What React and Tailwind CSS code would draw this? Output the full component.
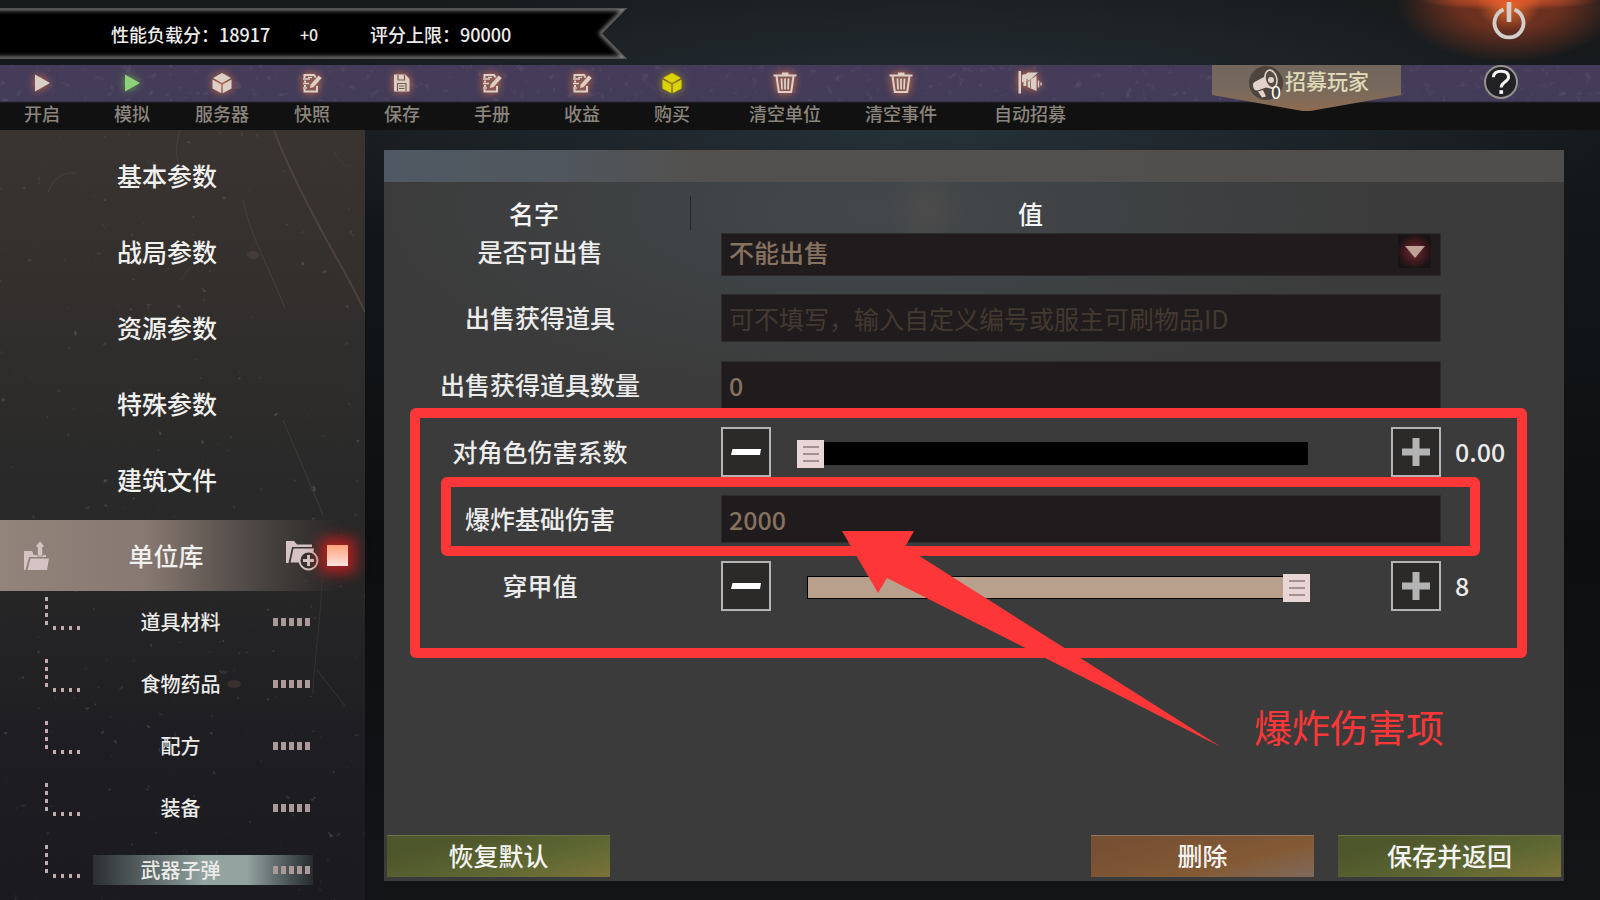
import React, { useState } from 'react';

const GLOW = "overflow-visible drop-shadow-[0_0_4px_rgba(235,120,70,0.9)]";

/* ---------- icons ---------- */

function PlayIcon({ className = "" }) {
    return (
        <svg viewBox="0 0 24 24" className={`size-6 overflow-visible ${className}`} fill="currentColor">
            <path d="M5 3.500v17L20 12z" />
        </svg>
    );
}

function CubeIcon({ className = "" }) {
    return (
        <svg viewBox="0 0 24 24" className={`size-6 overflow-visible ${className}`} fill="currentColor">
            <path d="M12 2 21 7 12 12 3 7z" />
            <path d="M2.5 8.6 11.3 13.4V22.2L2.5 17.4z" />
            <path d="M21.5 8.6 12.7 13.4V22.2L21.5 17.4z" />
        </svg>
    );
}

function NoteIcon() {
    return (
        <svg viewBox="0 0 24 24" className={`size-6 ${GLOW}`}>
            <path d="M4.500 3h10l2 3L10 14v3h4l4-3v7H4.500z" fill="#8a5a55" />
            <g fill="none" stroke="currentColor" strokeWidth="2">
                <path d="M15.500 6.500 14 4H4.500v3M5 9.500v2M5 14v2M4.500 18v2.500H17V15" />
                <path d="M3 8h7M3 12.500h6M3 17h4" strokeWidth="1.700" />
                <path d="M8 6.500h4" strokeWidth="1.300" />
            </g>
            <path d="M18.500 4.500 21.800 7 13.500 16 9.800 17 10.800 13.500z" fill="currentColor" />
        </svg>
    );
}

function DiskIcon() {
    return (
        <svg viewBox="0 0 24 24" className={`size-6 ${GLOW}`}>
            <path d="M4 3.500h11.500L19.500 8v12.500H4z" fill="currentColor" />
            <path d="M8 4v5h6.500V4M7.500 20v-7.500h8.500V20M9 15h5.500M9 17.500h5.500" fill="none" stroke="#7d5a52" strokeWidth="1.200" />
        </svg>
    );
}

function BinIcon() {
    return (
        <svg viewBox="0 0 24 24" className={`size-6 ${GLOW}`} fill="none" stroke="currentColor">
            <path d="M4.500 5 6 20H18L19.500 5z" fill="#8a5a55" stroke="none" />
            <path d="M.5 4.500h23M9 2.500h6.500" strokeWidth="2" />
            <path d="M3.500 5 5.800 21H18.200L20.500 5" strokeWidth="2" />
            <path d="M8.500 7.500 9 18.500M12 7.500v11M15.500 7.500 15 18.500" strokeWidth="1.800" />
        </svg>
    );
}

function FlagHornIcon() {
    return (
        <svg viewBox="0 0 24 24" className={`size-6 ${GLOW}`} fill="currentColor">
            <path d="M.5 0h2.500v22.500H.5z" />
            <path d="M4 4 8 3l2-1.500h10L13 8 9.500 10H8v1H4z" />
            <path d="M5.500 9.500h3v5.500h-3z" />
            <path d="M9.500 11 18.500 4.500V20L13 17.500 9.500 16z" />
            <path d="M20.500 9.500v7M23 11.500v3" stroke="currentColor" strokeWidth="1.400" />
            <path d="M9 8v8M12.500 9.200v7.800" stroke="#7d5a52" strokeWidth=".8" />
        </svg>
    );
}

function PowerIcon() {
    return (
        <svg viewBox="0 0 36 40" className="h-10 w-9" fill="none" stroke="#d3cdcc">
            <path d="M12.500 9.500a14.500 14.500 0 1 0 11 0" strokeWidth="3.800" />
            <path d="M18 2v20" strokeWidth="4.600" />
        </svg>
    );
}

function MegaphoneIcon() {
    return (
        <svg viewBox="0 0 34 34" className="size-[34px]">
            <circle cx="17" cy="17" r="17" fill="#4d443d" />
            <path d="M4 19c0-2 1-3 2.500-3.500L15 11l5-6 4 18-7-1.500-8.500 3C5.500 25 4 22 4 19z" fill="#e0d2c8" />
            <ellipse cx="22" cy="13" rx="5.800" ry="9" transform="rotate(-14 22 13)" fill="#574b43" stroke="#e0d2c8" strokeWidth="1.600" />
            <circle cx="22" cy="14" r="3" fill="#e0d2c8" />
            <path d="M9 25.500 14 24l3 6.500-4 1z" fill="#e0d2c8" />
        </svg>
    );
}

function FolderUpIcon() {
    return (
        <svg viewBox="0 0 25 30" className="h-[30px] w-[25px]" fill="#d5c3c4">
            <path d="M0 10h8l1.500 4H22v2H5L1.500 29H0z" />
            <path d="M6.500 17.500H25L23 29H3.500z" />
            <path d="M16 0l5 6h-2.500v9h-5V6H11z" stroke="#8b7e77" strokeWidth=".6" />
        </svg>
    );
}

function FolderAddIcon() {
    return (
        <svg viewBox="0 0 33 31" className="h-[31px] w-[33px]" fill="#d5c3c4">
            <path d="M0 1h8l3 3.500h15V7H6L2.500 23H0z" />
            <path d="M7.500 8.500H28l-1 5.500a9 9 0 0 0-12 8.500H4.500z" />
            <circle cx="22.500" cy="20.500" r="9" fill="#37322f" stroke="#d5c3c4" strokeWidth="2" />
            <path d="M22.500 15v11M17 20.500h11" stroke="#d5c3c4" strokeWidth="3" />
        </svg>
    );
}

function TreeDots() {
    return (
        <svg viewBox="0 0 37 33" className="mt-1.5 ml-[45px] h-[33px] w-[37px] shrink-0 self-start" fill="#c0aeae">
            {[0, 8, 16, 24].map((n) => (
                <React.Fragment key={n}>
                    <rect x="0" y={n} width="3" height="4" />
                    <rect x={n + 8} y="29" width="3" height="4" />
                </React.Fragment>
            ))}
        </svg>
    );
}

/* ---------- top ---------- */

function ScoreBanner() {
    return (
        <div className="relative mt-2 flex h-[51px] w-[627px] items-center text-lg leading-none font-medium text-[#ededed]">
            <svg viewBox="0 0 627 51" className="absolute inset-0 h-full w-full">
                <defs>
                    <clipPath id="banner"><path d="M0 0H627L602 25.500 627 51H0z" /></clipPath>
                    <filter id="soft"><feGaussianBlur stdDeviation="2" /></filter>
                </defs>
                <g clipPath="url(#banner)">
                    <rect width="627" height="51" fill="#000" />
                    <path d="M-9 0H627L602 25.500 627 51H-9" fill="none" stroke="#858585" strokeWidth="5" filter="url(#soft)" />
                    <path d="M-9 0H627L602 25.500 627 51H-9" fill="none" stroke="#555" strokeWidth="2" />
                </g>
            </svg>
            <span className="relative w-[188px] pl-[111px] whitespace-nowrap">性能负载分：18917</span>
            <span className="relative ml-[112px] w-[70px] text-base">+0</span>
            <span className="relative whitespace-nowrap">评分上限：90000</span>
        </div>
    );
}

const TOOLS = [
    { label: '开启', icon: <PlayIcon className="drop-shadow-[0_0_4px_rgba(235,120,70,0.9)]" /> },
    { label: '模拟', icon: <PlayIcon className="text-[#8fd07c] drop-shadow-[0_0_4px_rgba(120,200,80,0.8)]" /> },
    { label: '服务器', icon: <CubeIcon className="drop-shadow-[0_0_4px_rgba(235,120,70,0.9)]" /> },
    { label: '快照', icon: <NoteIcon /> },
    { label: '保存', icon: <DiskIcon /> },
    { label: '手册', icon: <NoteIcon /> },
    { label: '收益', icon: <NoteIcon /> },
    { label: '购买', icon: <CubeIcon className="text-[#dcd200] drop-shadow-[0_0_4px_rgba(220,190,0,0.7)]" /> },
];

const WIDE_TOOLS = [
    { label: '清空单位', icon: <BinIcon />, width: "w-[116px]" },
    { label: '清空事件', icon: <BinIcon />, width: "w-[116px]" },
    { label: '自动招募', icon: <FlagHornIcon />, width: "w-[142px]" },
];

function ToolButton({ label, icon, width }) {
    return (
        <button type="button" className={`flex shrink-0 flex-col items-center text-[#dccfc5] ${width}`}>
            <span className="flex h-9 items-center">{icon}</span>
            <span className="flex h-7 items-center pb-1 text-lg leading-none font-medium text-[#8b857d]">{label}</span>
        </button>
    );
}

function Toolbar() {
    return (
        <nav className="relative flex h-[65px] bg-[linear-gradient(#453c5a_0,#433c58_36px,#2c2836_37px,#111_38px)]">
            <svg className="absolute inset-x-0 top-0 h-9 w-full" preserveAspectRatio="none">
                <defs>
                    <filter id="grain">
                        <feTurbulence type="fractalNoise" baseFrequency="0.12" numOctaves="3" seed="4" />
                        <feColorMatrix values="0 0 0 0 0.14  0 0 0 0 0.12  0 0 0 0 0.18  0 6 0 0 -3.9" />
                    </filter>
                </defs>
                <rect width="100%" height="100%" filter="url(#grain)" opacity=".35" />
            </svg>
            <div className="relative flex flex-1">
                <div className="-ml-0.5 flex gap-0.5">
                    {TOOLS.map((tool) => <ToolButton key={tool.label} {...tool} width="w-[88px]" />)}
                </div>
                <div className="ml-[11px] flex">
                    {WIDE_TOOLS.map((tool) => <ToolButton key={tool.label} {...tool} />)}
                </div>
                <button
                    type="button"
                    className="mr-[83px] ml-auto flex h-[46px] w-[189px] items-start bg-linear-to-b from-[#72655c] via-[#78695d] to-[#8d6c51] pt-px pl-[37px] [clip-path:polygon(0_0,100%_0,100%_30px,52%_100%,48%_100%,0_30px)]"
                >
                    <span className="relative">
                        <MegaphoneIcon />
                        <span className="absolute right-0.5 bottom-0 text-lg leading-none text-white">0</span>
                    </span>
                    <span className="pt-0.5 pl-0.5 text-[21px] leading-6 font-medium text-[#dfdbb8]">招募玩家</span>
                </button>
                <button
                    type="button"
                    aria-label="帮助"
                    className="mr-[82px] flex size-[34px] items-center justify-center rounded-full border-2 border-[#96938f] bg-[#222124]"
                >
                    <svg viewBox="0 0 24 24" className="size-7" fill="none" stroke="#f4f4f4" strokeWidth="2.600">
                        <path d="M5.500 8C5.500 4.500 8 2.800 12 2.800s6.500 1.700 6.500 5c0 4.200-6.300 4-6.300 9" />
                        <path d="M12.200 19v3.200" strokeWidth="3.200" />
                    </svg>
                </button>
            </div>
        </nav>
    );
}

/* ---------- sidebar ---------- */

const SECTIONS = ['基本参数', '战局参数', '资源参数', '特殊参数', '建筑文件'];
const UNITS = ['道具材料', '食物药品', '配方', '装备', '武器子弹'];

function Scratches() {
    return (
        <svg viewBox="0 0 365 770" className="absolute inset-0 h-full w-full" preserveAspectRatio="none" fill="none">
            <filter id="specks">
                <feTurbulence type="fractalNoise" baseFrequency="0.11" numOctaves="3" seed="9" />
                <feColorMatrix values="0 0 0 0 0.4  0 0 0 0 0.29  0 0 0 0 0.27  0 8 0 0 -6.200" />
            </filter>
            <rect width="365" height="770" filter="url(#specks)" opacity=".28" />
            <path d="M274 0C284 28 300 60 318 94S350 150 365 182" stroke="#4d423b" strokeWidth="2" />
            <path d="M180 0C176 12 176 24 178 32M48 62C54 48 62 42 76 43M243 70C250 105 270 140 285 178" stroke="#4a403a" />
            <path d="M335 22c2 8 8 12 14 15M190 137l-9 13M283 290l40 95" stroke="#453a35" />
            <path d="M322 450c-2 50-8 80-9 114M317 540l28 36" stroke="#343434" />
            <ellipse cx="253" cy="125" rx="6" ry="4" fill="#463c37" />
            <ellipse cx="234" cy="554" rx="7" ry="4" fill="#3a302e" />
        </svg>
    );
}

function UnitRow({ label, active }) {
    return (
        <button type="button" className="flex h-[62px] w-full items-center text-left">
            <TreeDots />
            <span className={`ml-[11px] flex h-[30px] w-[220px] items-center ${active ? 'bg-[linear-gradient(90deg,#2b2f31_0,#6f7d7b_35%,#92a3a0_50%,#92a3a0_70%,#4e5858_88%,#272b2d)]' : ''}`}>
                <span className="w-[175px] text-center text-xl leading-none font-medium text-[#ebebe9]">{label}</span>
                <span className="ml-[5px] flex gap-[3px]">
                    {[0, 1, 2, 3, 4].map((n) => <i key={n} className="h-2 w-[5px] bg-[#ab9999]" />)}
                </span>
            </span>
        </button>
    );
}

function Sidebar() {
    return (
        <aside className="relative w-[365px] shrink-0 bg-[linear-gradient(#3a3431,#2d2c2b_35%,#262627_60%,#1e1e22_80%,#1a1a1f)]">
            <Scratches />
            <div className="relative pt-[9px]">
                {SECTIONS.map((label) => (
                    <button
                        key={label}
                        type="button"
                        className="flex h-[76px] w-full items-center justify-center pr-[31px] pb-1 text-[25px] leading-none font-medium text-[#f0f0ee]"
                    >
                        {label}
                    </button>
                ))}
                <button
                    type="button"
                    className="mt-px flex h-[71px] w-full items-center bg-[linear-gradient(90deg,#92837b_0,#877971_40%,#5b534f_62%,#3c3836_80%,transparent_93%)] pl-6 text-[25px] leading-none font-medium text-[#f0f0ee]"
                >
                    <FolderUpIcon />
                    <span className="w-[234px] text-center">单位库</span>
                    <span className="ml-[3px]"><FolderAddIcon /></span>
                    <i className="ml-2 size-[21px] bg-linear-to-b from-[#ffa27c] to-[#fbe3dc] shadow-[0_0_14px_7px_rgba(214,30,30,0.8)]" />
                </button>
                <div className="-mb-px">
                    {UNITS.map((label) => <UnitRow key={label} label={label} active={label === '武器子弹'} />)}
                </div>
            </div>
        </aside>
    );
}

/* ---------- form ---------- */

const FIELD = "w-full border border-[#2d2b2c] bg-[#201c1d] pr-2 pl-[7px] text-[25px] leading-none text-[#877260] outline-none placeholder:text-[#443930]";
const RANGE = "col-start-1 row-start-1 h-7 w-full appearance-none bg-transparent outline-none [&::-webkit-slider-thumb]:h-7 [&::-webkit-slider-thumb]:w-[27px] [&::-webkit-slider-thumb]:appearance-none [&::-webkit-slider-thumb]:[background:linear-gradient(#a58f93,#a58f93)_6px_6px/16px_2px_no-repeat,linear-gradient(#a58f93,#a58f93)_6px_13px/16px_2px_no-repeat,linear-gradient(#a58f93,#a58f93)_6px_20px/16px_2px_no-repeat,#e8d6d7]";

function FormRow({ id, label, tail, className = "h-[50px]", children }) {
    return (
        <div className={`flex items-center ${className}`}>
            <label htmlFor={id} className="w-[312px] shrink-0 pb-0.5 text-center text-[25px] leading-none font-medium text-[#ececec]">{label}</label>
            <div className="ml-[25px] min-w-0 flex-1">{children}</div>
            <output className="w-[123px] shrink-0 pb-0.5 pl-[14px] text-[25px] leading-none font-medium text-[#ececec]">{tail}</output>
        </div>
    );
}

function StepButton({ plus, onClick }) {
    return (
        <button type="button" aria-label={plus ? '+' : '-'} onClick={onClick} className="flex size-[50px] shrink-0 items-center justify-center border-2 border-[#b4b4b4] bg-[#2b2a28]">
            <svg viewBox="0 0 30 30" className="size-[30px]">
                {plus
                    ? <path d="M11.500 1h7v10.500H29v7H18.500V29h-7V18.500H1v-7H11.500z" fill="#b3b3b3" />
                    : <path d="M1.500 12H30l-1 6H0z" fill="#fff" />}
            </svg>
        </button>
    );
}

function SliderRow({ id, label, initial, max, step, format }) {
    const [value, setValue] = useState(initial);
    const move = (delta) => setValue((v) => Math.min(max, Math.max(0, v + delta)));

    return (
        <FormRow id={id} label={label} tail={format(value)}>
            <div className="flex items-center">
                <StepButton onClick={() => move(-step)} />
                <div className="mr-[81px] ml-[26px] grid flex-1 items-center pt-[3px]">
                    <div className="col-start-1 row-start-1 mr-0.5 ml-2.5 h-[23px] border border-black bg-black">
                        <div className="h-full bg-[#b8a08c]" style={{ width: `${(value / max) * 100}%` }} />
                    </div>
                    <input
                        id={id}
                        type="range"
                        min="0"
                        max={max}
                        step={step}
                        value={value}
                        onChange={(e) => setValue(Number(e.target.value))}
                        className={RANGE}
                    />
                </div>
                <StepButton plus onClick={() => move(step)} />
            </div>
        </FormRow>
    );
}

function ActionButton({ tone, className = "", children }) {
    const tones = {
        green: "border-[#6d7444] bg-[linear-gradient(165deg,#4e562b_20%,#5c6632_60%,#7b7439)]",
        brown: "border-[#95765a] bg-[linear-gradient(165deg,#775033_15%,#845a35_65%,#806a5c)]",
    };
    return (
        <button type="button" className={`h-[42px] w-[223px] border-t pb-0.5 text-[25px] leading-none font-medium text-[#f4f4f2] ${tones[tone]} ${className}`}>
            {children}
        </button>
    );
}

function ParamPanel() {
    return (
        <section className="flex flex-1 flex-col bg-[#3b3b3b] bg-[radial-gradient(40px_50px_at_46%_60px,#4c4b4a,transparent),radial-gradient(500px_180px_at_42%_60px,#42484b,transparent)]">
            <div className="h-8 bg-[linear-gradient(90deg,#505963_0,#50565d_15%,#52514f_26%,#4f4e4c)]" />
            <div className="mt-[14px] mb-[3px] flex h-[34px] items-center text-center text-[25px] leading-none font-medium text-[#f4f4f4]">
                <span className="flex h-full w-[307px] items-center justify-center border-r border-[#262829] pr-1.5">名字</span>
                <span className="flex-1 pr-[194px]">值</span>
            </div>
            <form className="flex flex-col gap-[17px]">
                <FormRow id="sellable" label="是否可出售" className="h-[43px] pb-1">
                    <div className="relative -mb-1">
                        <select id="sellable" className={`h-[43px] appearance-none pb-1 font-medium ${FIELD}`}>
                            <option>不能出售</option>
                        </select>
                        <span className="pointer-events-none absolute top-0.5 right-2.5 flex h-[33px] w-[33px] items-center justify-center bg-[radial-gradient(#6e2d31,#40191d_45%,#1a1315_75%)]">
                            <svg viewBox="0 0 20 12" className="h-3 w-5"><path d="M0 0h20L10 12z" fill="#bda496" /></svg>
                        </span>
                    </div>
                </FormRow>
                <FormRow id="sell-item" label="出售获得道具">
                    <input id="sell-item" type="text" placeholder="可不填写，输入自定义编号或服主可刷物品ID" className={`h-12 ${FIELD}`} />
                </FormRow>
                <FormRow id="sell-count" label="出售获得道具数量">
                    <input id="sell-count" type="text" defaultValue="0" className={`h-12 font-medium ${FIELD}`} />
                </FormRow>
                <SliderRow id="role-ratio" label="对角色伤害系数" initial={0} max={10} step={0.01} format={(v) => v.toFixed(2)} />
                <FormRow id="blast" label="爆炸基础伤害">
                    <input id="blast" type="text" defaultValue="2000" className={`h-12 font-medium ${FIELD}`} />
                </FormRow>
                <SliderRow id="pierce" label="穿甲值" initial={8} max={8} step={1} format={(v) => v} />
            </form>
            <div className="mt-auto flex px-[3px] pb-1">
                <ActionButton tone="green">恢复默认</ActionButton>
                <ActionButton tone="brown" className="ml-auto">删除</ActionButton>
                <ActionButton tone="green" className="ml-6">保存并返回</ActionButton>
            </div>
        </section>
    );
}

/* Red marks drawn over the form */
function Annotations() {
    return (
        <div className="pointer-events-none absolute inset-0">
            <div className="absolute top-[408px] left-[410px] h-[250px] w-[1117px] rounded-md border-10 border-[#fd3737]" />
            <div className="absolute top-[477px] left-[441px] h-[79px] w-[1039px] rounded-md border-10 border-[#fd3737]" />
            <svg viewBox="842 531 380 217" className="absolute top-[531px] left-[842px] h-[217px] w-[380px]">
                <path d="M842 531H914L905 547 921 557 1221 747 887 578 878 593z" fill="#fd3737" />
            </svg>
            <p className="absolute top-[707px] left-[1254px] text-[38px] leading-none text-[#fd3737]">爆炸伤害项</p>
        </div>
    );
}

export default function App() {
    return (
        <div className="relative flex min-h-screen flex-col overflow-hidden bg-[#0d0e0f] bg-[radial-gradient(700px_160px_at_58%_120px,#27323a,transparent),linear-gradient(#181b1c,#13171a_25%,#0d0e0f_60%,#121415)] font-['Noto_Sans_CJK_SC',sans-serif]">
            <header className="flex h-[65px] items-start justify-between bg-[radial-gradient(90px_10px_at_1509px_0,#e2592c,transparent),radial-gradient(32px_26px_at_1509px_4px,#f0702a,transparent),radial-gradient(112px_60px_at_1509px_2px,#6b301f_45%,transparent)]">
                <ScoreBanner />
                <button type="button" aria-label="退出" className="mr-[73px]"><PowerIcon /></button>
            </header>
            <Toolbar />
            <div className="flex flex-1">
                <Sidebar />
                <main className="flex min-w-0 flex-1 flex-col pt-5 pr-9 pb-[19px] pl-[19px]">
                    <ParamPanel />
                </main>
            </div>
            <Annotations />
        </div>
    );
}
